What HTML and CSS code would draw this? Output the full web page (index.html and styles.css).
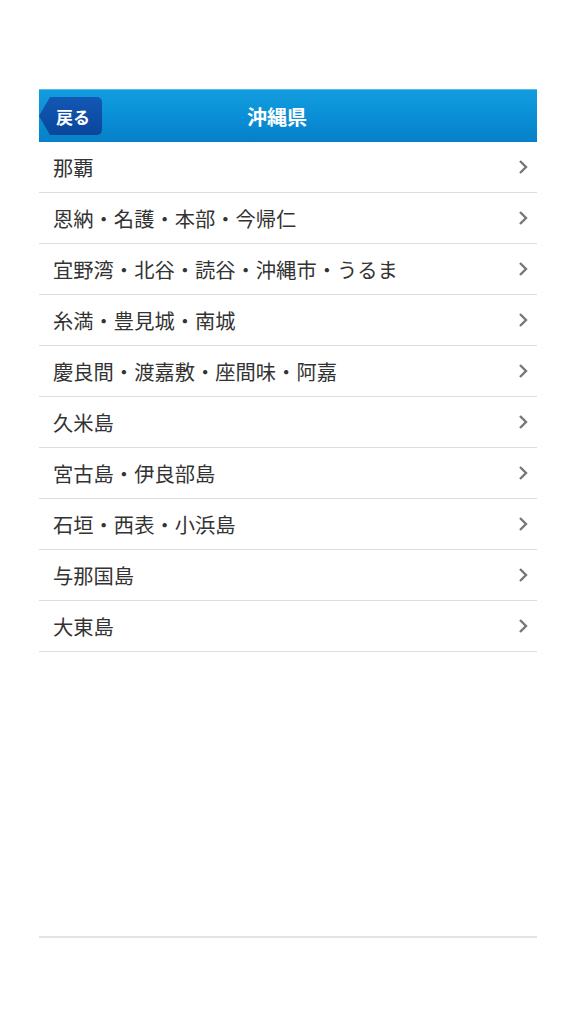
FILE: index.html
```html
<!DOCTYPE html>
<html lang="ja">
<head>
	<meta charset="utf-8">
	<title>沖縄県</title>
	<link rel="stylesheet" href="styles.css">
</head>
<body>
	<div class="container">
		<div class="header">
			<a class="back-btn" href="#">戻る</a>
			<h1>沖縄県</h1>
		</div>
		<ul class="area-list">
			<li><span>那覇</span><svg class="chevron" viewBox="0 0 10 16"><polyline points="2,2 8,8 2,14"/></svg></li>
			<li><span>恩納・名護・本部・今帰仁</span><svg class="chevron" viewBox="0 0 10 16"><polyline points="2,2 8,8 2,14"/></svg></li>
			<li><span>宜野湾・北谷・読谷・沖縄市・うるま</span><svg class="chevron" viewBox="0 0 10 16"><polyline points="2,2 8,8 2,14"/></svg></li>
			<li><span>糸満・豊見城・南城</span><svg class="chevron" viewBox="0 0 10 16"><polyline points="2,2 8,8 2,14"/></svg></li>
			<li><span>慶良間・渡嘉敷・座間味・阿嘉</span><svg class="chevron" viewBox="0 0 10 16"><polyline points="2,2 8,8 2,14"/></svg></li>
			<li><span>久米島</span><svg class="chevron" viewBox="0 0 10 16"><polyline points="2,2 8,8 2,14"/></svg></li>
			<li><span>宮古島・伊良部島</span><svg class="chevron" viewBox="0 0 10 16"><polyline points="2,2 8,8 2,14"/></svg></li>
			<li><span>石垣・西表・小浜島</span><svg class="chevron" viewBox="0 0 10 16"><polyline points="2,2 8,8 2,14"/></svg></li>
			<li><span>与那国島</span><svg class="chevron" viewBox="0 0 10 16"><polyline points="2,2 8,8 2,14"/></svg></li>
			<li><span>大東島</span><svg class="chevron" viewBox="0 0 10 16"><polyline points="2,2 8,8 2,14"/></svg></li>
		</ul>
		<div class="footer-line"></div>
	</div>
</body>
</html>
```

FILE: styles.css
```css
body {
	margin: 0;
	background-color: #fff;
	font-family: "Noto Sans CJK JP", "Noto Sans", sans-serif;
	color: #333;
}

.container {
	width: 498px;
	margin: 89px 0 0 39px;
}

.header {
	display: flex;
	align-items: center;
	height: 53px;
	background: linear-gradient(#129ddf, #0a8fd6 50%, #0680c8);
	border-top: 1px solid #52bced;
	box-sizing: border-box;
}

.back-btn {
	display: flex;
	align-items: center;
	height: 38px;
	width: 63px;
	box-sizing: border-box;
	padding-left: 17px;
	background: linear-gradient(#1258b4, #0a469c);
	border-radius: 0 5px 5px 0;
	clip-path: polygon(11px 0, 100% 0, 100% 100%, 11px 100%, 0 50%);
	color: #fff;
	font-size: 17px;
	font-weight: bold;
	text-decoration: none;
}

.header h1 {
	flex: 1;
	margin: 0;
	padding-right: 85px;
	text-align: center;
	color: #fff;
	font-size: 20px;
	font-weight: bold;
}

.area-list {
	list-style: none;
	margin: 0;
	padding: 0;
}

.area-list li {
	display: flex;
	align-items: center;
	justify-content: space-between;
	height: 50px;
	padding: 0 9px 0 14px;
	border-bottom: 1px solid #dedede;
	font-size: 20.3px;
}

.chevron {
	width: 10px;
	height: 16px;
	fill: none;
	stroke: #777;
	stroke-width: 2.4;
}

.footer-line {
	margin-top: 284px;
	border-top: 2px solid #e4e4e4;
}
```
